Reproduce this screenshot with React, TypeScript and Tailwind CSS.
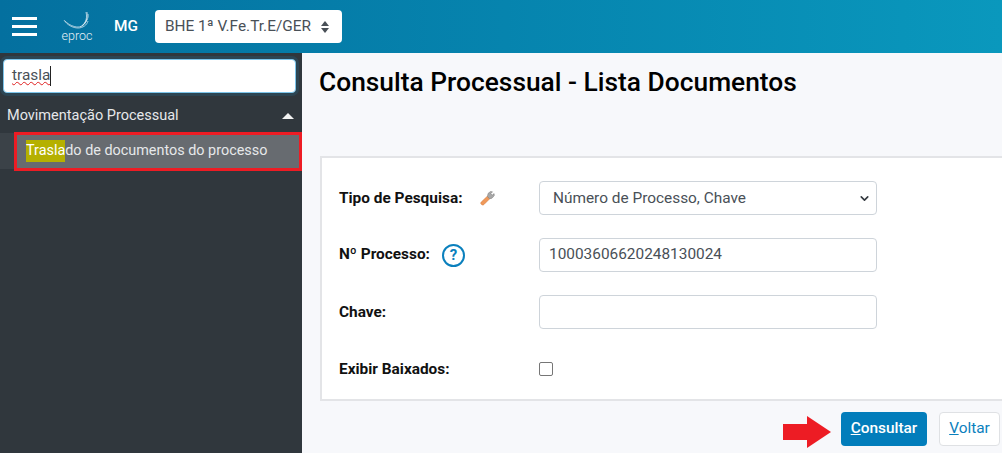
import React from 'react';
import { ChevronDown } from 'lucide-react';

const font = { fontFamily: 'Roboto, sans-serif' };

const Logo = () => (
  <div className="flex w-[32px] flex-col items-center">
    <svg width="32" height="22" viewBox="0 0 32 22" fill="none" stroke="#dcebf3" strokeWidth="0.7">
      <path d="M3 9c3 5 9 8 14 8 5 0 9-3 10-7" />
      <path d="M4 10c4 4 9 6 13 6 5 0 8-4 9-8" />
      <path d="M19 16c4-2 8-7 6-15" />
      <path d="M21 15c4-3 6-8 5-14" />
      <path d="M22 14c3-3 6-7 5-11" />
    </svg>
    <span className="mt-[-4px] text-[12.5px] font-light leading-[13px] text-[#e4f0f6]">eproc</span>
  </div>
);

const Wrench = () => (
  <svg width="16" height="16" viewBox="0 0 16 16">
    <path d="M1.500 14.500c-1-.8-1-1.600-.3-2.400L7.500 6l2.500 2.500-6 6c-.8.800-1.600.700-2.500 0z" fill="#f0995a" stroke="#d07c40" strokeWidth="0.5" />
    <path d="M7.500 6.500 8 3.500 10.500 1.500l2 .3-1.700 1.900 1.400 1.400 1.900-1.500.2 2-2.300 2.600-2.500.6z" fill="#a8a8a8" stroke="#777" strokeWidth="0.5" />
  </svg>
);

const App: React.FC = () => {
  return (
    <div className="flex h-[453px] w-[1002px] flex-col overflow-hidden bg-[#f7f8fb] text-[15.4px]" style={font}>
      <header className="flex h-[53px] items-center bg-gradient-to-r from-[#04709f] to-[#0a98bd]">
        <div className="ml-[12px] flex w-[25px] flex-col gap-[5px]">
          <span className="h-[3px] bg-white" />
          <span className="h-[3px] bg-white" />
          <span className="h-[3px] bg-white" />
        </div>
        <div className="ml-[24px]">
          <Logo />
        </div>
        <span className="ml-[21px] text-[15.4px] font-medium text-white">MG</span>
        <div className="ml-[17px] flex h-[33px] w-[187px] items-center justify-between rounded-[4px] bg-white pl-[10px] pr-[12px] text-[15.4px] text-[#495057]">
          <span>BHE 1ª V.Fe.Tr.E/GER</span>
          <svg width="10" height="14" viewBox="0 0 10 14" fill="#495057">
            <path d="M5 1 9 6H1z" />
            <path d="M5 13 1 8h8z" />
          </svg>
        </div>
      </header>

      <div className="flex flex-1">
        <aside className="flex w-[302px] flex-col bg-[#30373d] pt-[6px]">
          <div className="ml-[3px] flex h-[34px] w-[293px] items-center rounded-[4px] border border-[#7cc4ea] bg-white pl-[8px] text-[15.4px] shadow-[0_0_0_3px_#2c4553]">
            <span className="text-[#495057] underline decoration-wavy decoration-[#e02020] decoration-1">trasla</span>
            <span className="h-[20px] w-px bg-[#222]" />
          </div>
          <div className="mt-[7px] flex h-[31px] items-center justify-between pl-[7px] pr-[8px] text-[14.5px] text-[#e6e8ea]">
            <span>Movimentação Processual</span>
            <span className="h-0 w-0 border-x-[6px] border-b-[6px] border-x-transparent border-b-[#f2f2f2]" />
          </div>
          <div className="mt-[2px] h-[36px] bg-[#3b4248] pl-[14px]">
            <div className="flex h-[39px] -translate-y-[1px] items-center border-[3px] border-[#ed1c24] bg-[#676b70] pb-[1px] pl-[9px] text-[14.4px] text-[#e6e8ea]">
              <span className="bg-[#b5b000] text-white">Trasla</span>
              <span>do de documentos do processo</span>
            </div>
          </div>
        </aside>

        <main className="flex flex-1 flex-col pl-[18px]">
          <h1 className="-ml-[1px] mt-[13px] text-[26.35px] font-medium leading-[32px] text-black">Consulta Processual - Lista Documentos</h1>

          <section className="mt-[58px] flex h-[245px] flex-col border-2 border-[#e3e4e7] border-r-0 bg-white pl-[17px]">
            <div className="mt-[23px] flex h-[34px] items-center">
              <label className="w-[141px] pt-[1px] font-bold text-[#111]">Tipo de Pesquisa:</label>
              <span className="w-[59px]">
                <Wrench />
              </span>
              <div className="flex h-[34px] w-[338px] items-center justify-between rounded-[4px] border border-[#ced4da] bg-white pl-[13px] pr-[5px] pt-[1px] text-[#495057]">
                <span>Número de Processo, Chave</span>
                <ChevronDown size={13} strokeWidth={3} color="#343a40" />
              </div>
            </div>
            <div className="mt-[23px] flex h-[34px] items-center">
              <label className="w-[103px] font-bold text-[#111]">Nº Processo:</label>
              <span className="flex h-[24px] w-[97px] items-center">
                <span className="flex h-[23px] w-[23px] items-center justify-center rounded-full border-[2px] border-[#0b80bd] text-[15px] font-bold text-[#0b80bd]">?</span>
              </span>
              <div className="flex h-[34px] w-[338px] items-center rounded-[4px] border border-[#ced4da] bg-white pl-[9px] text-[#495057]">10003606620248130024</div>
            </div>
            <div className="mt-[23px] flex h-[34px] items-center">
              <label className="w-[200px] pt-[1px] font-bold text-[#111]">Chave:</label>
              <div className="h-[34px] w-[338px] rounded-[4px] border border-[#ced4da] bg-white" />
            </div>
            <div className="mt-[23px] flex h-[34px] items-center">
              <label className="w-[200px] pt-[1px] font-bold text-[#111]">Exibir Baixados:</label>
              <span className="h-[14px] w-[14px] rounded-[2px] border border-[#767676] bg-white" />
            </div>
          </section>

          <div className="mt-[11px] flex items-start justify-end gap-[12px] pr-[2px]">
            <svg width="48" height="32" viewBox="0 0 48 32" className="mr-[-2px] mt-[4px]">
              <path d="M0 8h24V0l24 16-24 16v-8H0z" fill="#ed1c24" />
            </svg>
            <button className="h-[34px] w-[86px] rounded-[4px] bg-[#027dbb] font-medium text-white">
              <span className="underline">C</span>onsultar
            </button>
            <button className="h-[34px] w-[61px] rounded-[4px] border border-[#dfe1e4] bg-white text-[#0b80bd]">
              <span className="underline">V</span>oltar
            </button>
          </div>
        </main>
      </div>
    </div>
  );
};

export default App;
